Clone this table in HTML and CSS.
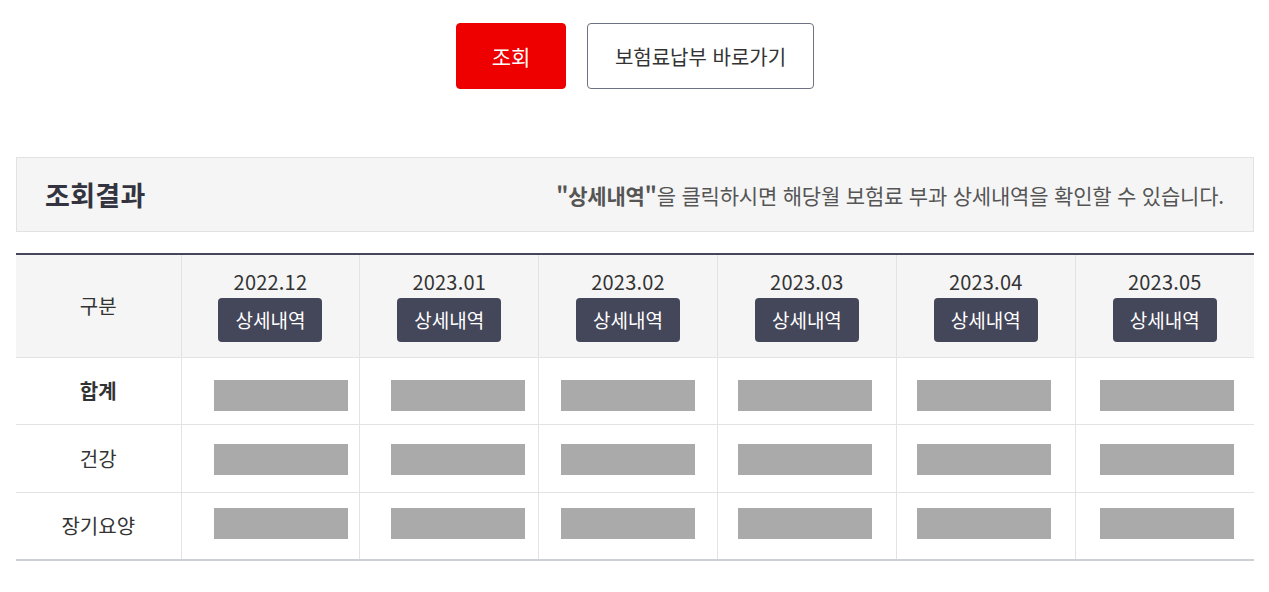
FILE: index.html
```html
<!DOCTYPE html>
<html lang="ko">
<head>
<meta charset="utf-8">
<link rel="stylesheet" href="styles.css">
</head>
<body>
<div class="page">
  <div class="actions">
    <button class="btn btn-primary">조회</button>
    <button class="btn btn-line">보험료납부 바로가기</button>
  </div>
  <div class="result-box">
    <h2 class="result-title">조회결과</h2>
    <p class="result-desc"><strong>"상세내역"</strong>을 클릭하시면 해당월 보험료 부과 상세내역을 확인할 수 있습니다.</p>
  </div>
  <table class="tbl">
    <thead>
      <tr>
        <th class="label">구분</th>
        <th><div class="month">2022.12</div><button class="detail">상세내역</button></th>
        <th><div class="month">2023.01</div><button class="detail">상세내역</button></th>
        <th><div class="month">2023.02</div><button class="detail">상세내역</button></th>
        <th><div class="month">2023.03</div><button class="detail">상세내역</button></th>
        <th><div class="month">2023.04</div><button class="detail">상세내역</button></th>
        <th><div class="month">2023.05</div><button class="detail">상세내역</button></th>
      </tr>
    </thead>
    <tbody>
      <tr class="row-sum">
        <td class="label bold">합계</td>
        <td><span class="mask"></span></td><td><span class="mask"></span></td><td><span class="mask"></span></td>
        <td><span class="mask"></span></td><td><span class="mask"></span></td><td><span class="mask"></span></td>
      </tr>
      <tr class="row-health">
        <td class="label">건강</td>
        <td><span class="mask"></span></td><td><span class="mask"></span></td><td><span class="mask"></span></td>
        <td><span class="mask"></span></td><td><span class="mask"></span></td><td><span class="mask"></span></td>
      </tr>
      <tr class="row-care">
        <td class="label">장기요양</td>
        <td><span class="mask"></span></td><td><span class="mask"></span></td><td><span class="mask"></span></td>
        <td><span class="mask"></span></td><td><span class="mask"></span></td><td><span class="mask"></span></td>
      </tr>
    </tbody>
  </table>
</div>
</body>
</html>
```

FILE: styles.css
```css
* { box-sizing: border-box; }
html, body { margin: 0; padding: 0; background: #fff; }
body {
  font-family: "Noto Sans CJK KR", "Noto Sans", sans-serif;
  color: #333;
}
.page { padding: 23px 15px 0 16px; }

.actions {
  display: flex;
  justify-content: center;
  gap: 21px;
}
.btn {
  height: 66px;
  border-radius: 4px;
  font-family: inherit;
  font-size: 20px;
  cursor: pointer;
}
.btn-primary {
  width: 110px;
  background: #ee0000;
  border: 1px solid #ee0000;
  color: #fff;
  font-size: 21px;
}
.btn-line {
  width: 227px;
  background: #fff;
  border: 1px solid #6e7282;
  color: #333;
}

.result-box {
  margin-top: 68px;
  height: 75px;
  background: #f5f5f5;
  border: 1px solid #e2e2e2;
  display: flex;
  align-items: center;
  justify-content: space-between;
  padding: 0 29px 0 28px;
}
.result-title {
  margin: 0;
  font-size: 27px;
  font-weight: 700;
  color: #33343f;
  letter-spacing: 0.3px;
}
.result-desc {
  margin: 0;
  font-size: 21px;
  color: #555;
  letter-spacing: -0.2px;
}
.result-desc strong { font-weight: 700; }

.tbl {
  margin-top: 21px;
  width: 100%;
  border-collapse: collapse;
  table-layout: fixed;
  border-top: 2px solid #44465a;
  border-bottom: 2px solid #cdcfd6;
}
.tbl th, .tbl td {
  border-left: 1px solid #e3e3e3;
  border-bottom: 1px solid #e3e3e3;
  text-align: center;
  font-size: 20px;
  font-weight: 400;
  color: #333;
  padding: 0;
}
.tbl th:first-child, .tbl td:first-child { border-left: 0; width: 165px; }
.tbl tbody tr:last-child td { border-bottom: 0; }
.tbl thead th { background: #f5f5f5; height: 103px; }
.tbl tbody .row-sum td { height: 67px; }
.tbl tbody .row-health td { height: 68px; }
.tbl tbody .row-care td { height: 68px; }
.tbl tbody td.bold { font-weight: 700; }
.tbl tbody .row-sum td { padding-top: 8px; }
.tbl tbody .row-sum td.label { padding-top: 0; }
.tbl tbody .row-care td { padding-bottom: 6px; }
.tbl tbody .row-care td.label { padding-bottom: 0; }

.month {
  font-size: 20px;
  line-height: 24px;
  margin-top: 0;
  letter-spacing: 0.2px;
}
.detail {
  margin-top: 4px;
  width: 104px;
  height: 44px;
  border: 0;
  border-radius: 4px;
  background: #44465a;
  color: #fff;
  font-family: inherit;
  font-size: 19px;
  letter-spacing: 0;
  cursor: pointer;
}

.mask {
  display: inline-block;
  width: 134px;
  height: 31px;
  background: #aaaaaa;
  vertical-align: middle;
}
.tbl tbody td:nth-child(2) .mask { margin-left: 21px; }
.tbl tbody td:nth-child(3) .mask { margin-left: 17px; }
.tbl tbody td:nth-child(7) .mask { margin-left: 5px; }
.tbl tbody td:nth-child(5) .mask,
.tbl tbody td:nth-child(6) .mask { margin-left: -3px; }
```
